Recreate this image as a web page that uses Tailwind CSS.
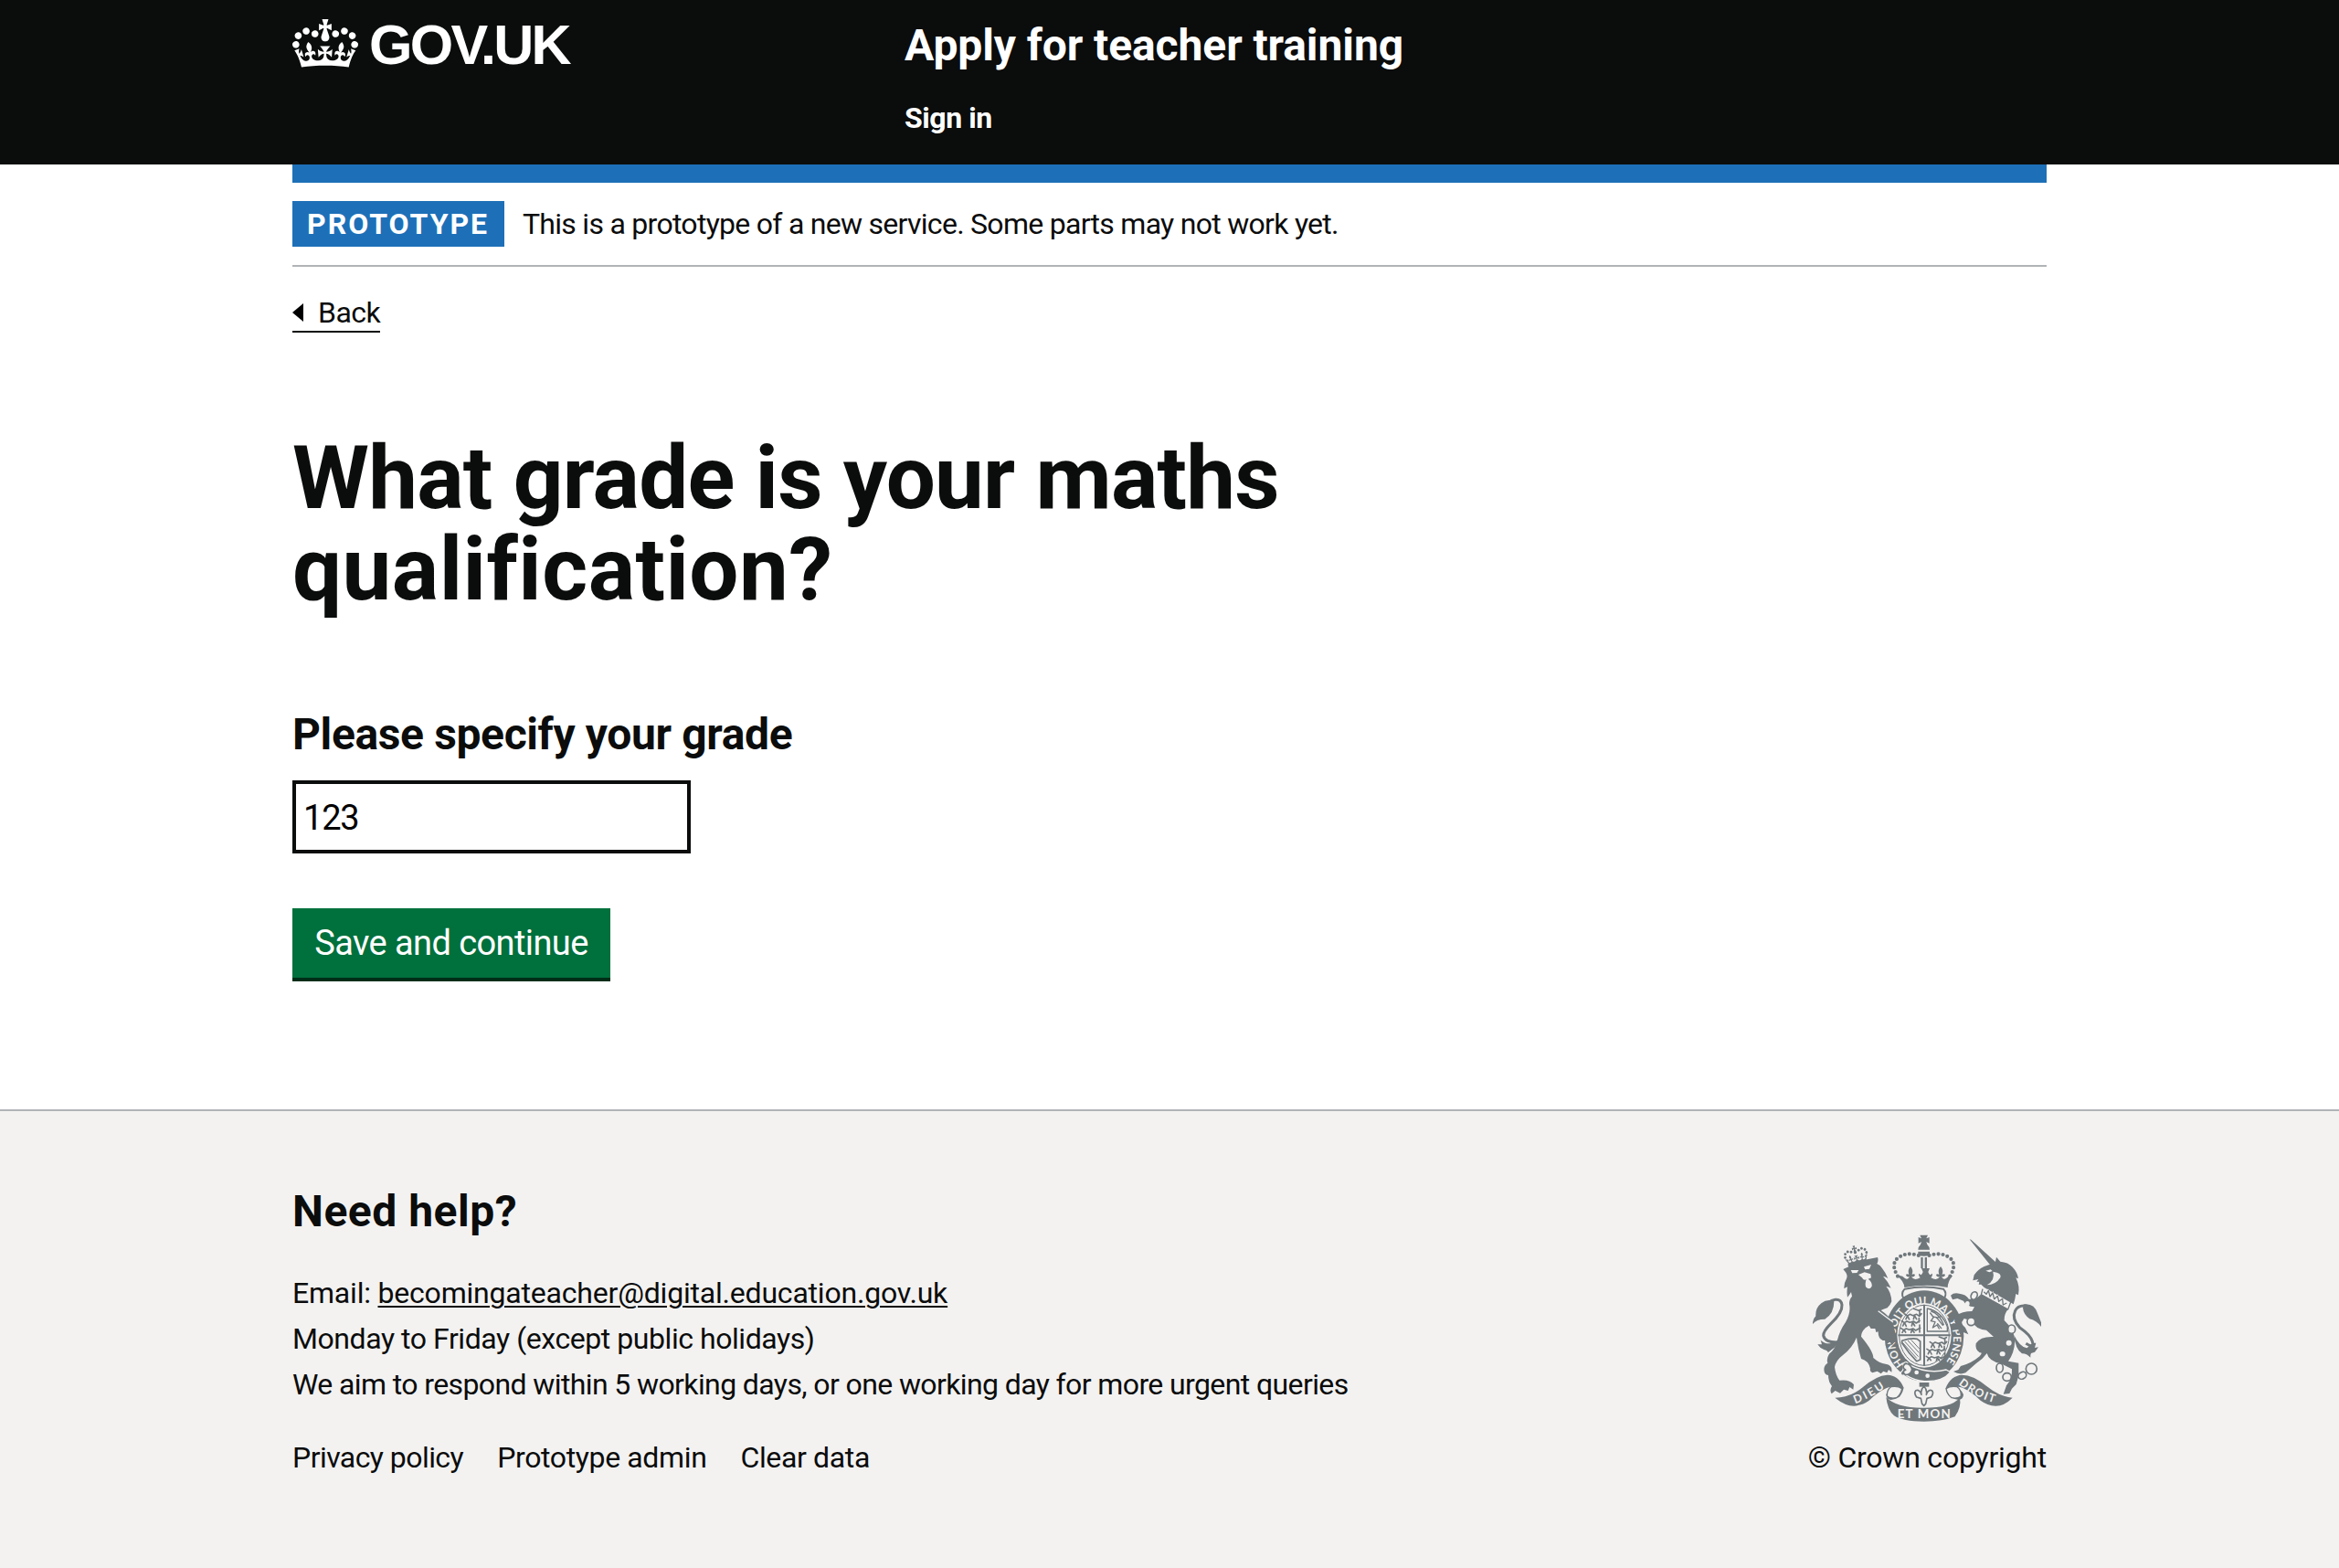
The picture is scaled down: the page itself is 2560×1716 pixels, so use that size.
<!DOCTYPE html>
<html lang="en">
<head>
<meta charset="utf-8">
<title>What grade is your maths qualification?</title>
<script src="https://cdn.jsdelivr.net/npm/@tailwindcss/browser@4"></script>
</head>
<body class="bg-white text-[#0b0c0c] font-['Roboto',sans-serif] text-[32px] leading-[50px]">
<header class="bg-[#0b0c0c] text-white h-[180px]">
  <div class="mx-[320px] flex">
    <a class="flex w-[670px] pt-[21px]">
      <svg class="w-[72px] h-[53px]" viewBox="0 0 132 97" fill="currentColor"><path id="crown" fill-rule="evenodd" d="M25 30.2c3.5 1.5 7.7-.2 9.1-3.7 1.5-3.6-.2-7.8-3.9-9.2-3.6-1.4-7.6.3-9.1 3.9-1.4 3.5.3 7.5 3.9 9zM9 39.5c3.6 1.5 7.8-.2 9.2-3.7 1.5-3.6-.2-7.8-3.9-9.1-3.6-1.5-7.6.2-9.1 3.8-1.4 3.5.3 7.5 3.8 9zM4.4 57.2c3.5 1.5 7.7-.2 9.1-3.8 1.5-3.6-.2-7.7-3.9-9.1-3.5-1.5-7.6.3-9.1 3.8-1.4 3.5.3 7.6 3.9 9.1zm38.3-21.4c3.5 1.5 7.7-.2 9.1-3.8 1.5-3.6-.2-7.7-3.9-9.1-3.6-1.5-7.6.3-9.1 3.8-1.3 3.6.4 7.7 3.9 9.1zm64.4-5.6c-3.6 1.5-7.8-.2-9.1-3.7-1.5-3.6.2-7.8 3.8-9.2 3.6-1.4 7.7.3 9.2 3.9 1.3 3.5-.4 7.5-3.9 9zm15.9 9.3c-3.6 1.5-7.7-.2-9.1-3.7-1.5-3.6.2-7.8 3.7-9.1 3.6-1.5 7.7.2 9.2 3.8 1.5 3.5-.3 7.5-3.8 9zm4.7 17.7c-3.6 1.5-7.8-.2-9.2-3.8-1.5-3.6.2-7.7 3.9-9.1 3.6-1.5 7.7.3 9.2 3.8 1.3 3.5-.4 7.6-3.9 9.1zM89.3 35.8c-3.6 1.5-7.8-.2-9.2-3.8-1.4-3.6.2-7.7 3.9-9.1 3.6-1.5 7.7.3 9.2 3.8 1.4 3.6-.3 7.7-3.9 9.1zM69.7 17.7l8.9 4.7V9.3l-8.9 2.8c-.2-.3-.5-.6-.9-.9L72.4 0H59.6l3.5 11.2c-.3.3-.6.5-.9.9l-8.8-2.8v13.1l8.8-4.7c.3.3.6.7.9.9l-5 15.4v.1c-.2.8-.4 1.6-.4 2.4 0 4.1 3.1 7.5 7 8.1h.2c.3 0 .7.1 1 .1.4 0 .7 0 1-.1h.2c4-.6 7.1-4.1 7.1-8.1 0-.8-.1-1.7-.4-2.4V34l-5.1-15.4c.4-.2.7-.6 1-.9zM66 92.8c16.9 0 32.8 1.1 47.1 3.2 4-16.9 8.9-26.7 14-33.5l-9.6-3.4c1 4.9 1.1 7.2 0 10.2-1.5-1.4-3-4.3-4.2-8.7L108.6 76c2.8-2 5-3.2 7.5-3.3-4.4 9.4-10 11.9-13.6 11.2-4.3-.8-6.3-4.6-5.6-7.9 1-4.7 5.7-5.9 8-.5 4.3-8.7-3-11.4-7.6-8.8 7.1-7.2 7.9-13.5 2.1-21.1-8 6.1-8.1 12.3-4.5 20.8-4.7-5.4-12.1-2.5-9.5 6.2 3.4-5.2 7.9-2 7.2 3.1-.6 4.3-6.4 7.8-13.5 7.2-10.3-.9-10.9-8-11.2-13.8 2.5-.5 7.1 1.8 11 7.3L80.2 60c-4.1 4.4-8 5.3-12.3 5.4 1.4-4.4 8-11.6 8-11.6H55.5s6.4 7.2 7.9 11.6c-4.2-.1-8-1-12.3-5.4l1.4 16.4c3.9-5.5 8.5-7.7 10.9-7.3-.3 5.8-.9 12.8-11.1 13.8-7.2.6-12.9-2.9-13.5-7.2-.7-5 3.8-8.3 7.1-3.1 2.7-8.7-4.6-11.6-9.4-6.2 3.7-8.5 3.6-14.7-4.6-20.8-5.8 7.6-5 13.9 2.2 21.1-4.7-2.6-11.9.1-7.7 8.8 2.3-5.5 7.1-4.2 8.1.5.7 3.3-1.3 7.1-5.7 7.9-3.5.7-9-1.8-13.5-11.2 2.5.1 4.7 1.3 7.5 3.3l-4.7-15.4c-1.2 4.4-2.7 7.2-4.3 8.7-1.1-3-.9-5.3 0-10.2l-9.5 3.4c5 6.9 9.9 16.7 14 33.5 14.8-2.1 30.8-3.2 47.7-3.2z"/></svg>
      <span class="ml-3 font-['Liberation_Sans',sans-serif] text-[61px] leading-[56px] font-bold tracking-[-2.7px]">GOV.UK</span>
    </a>
    <div class="flex flex-col font-bold pt-[25px]">
      <a class="text-[48px] leading-[50px] tracking-[-0.1px]">Apply for teacher training</a>
      <a class="mt-[34px] leading-[40px] tracking-[-0.42px]">Sign in</a>
    </div>
  </div>
</header>
<div class="mx-[320px] h-5 bg-[#1d70b8]"></div>
<main class="mx-[320px] flex flex-col items-start">
  <div class="flex w-full gap-5 py-5 border-b-2 border-[#b1b4b6]">
    <strong class="w-[232px] pl-4 bg-[#1d70b8] text-white font-bold tracking-[2px] whitespace-nowrap">PROTOTYPE</strong>
    <span class="tracking-[-0.72px]">This is a prototype of a new service. Some parts may not work yet.</span>
  </div>
  <a class="mt-[29px] flex items-center h-[43px] border-b-2 leading-[40px] tracking-[-0.53px]"><svg class="w-3 h-5 mr-4" viewBox="0 0 12 20"><path d="M0 10 12 0v20z"/></svg>Back</a>
  <h1 class="mt-[109px] text-[96px] leading-[100px] font-bold tracking-[-0.77px]">What grade is your maths<br><span class="tracking-[0.47px]">qualification?</span></h1>
  <label class="mt-[101px] text-[48px] leading-[60px] font-bold tracking-[-0.37px]">Please specify your grade</label>
  <div class="mt-5 w-[436px] h-20 border-4 border-[#0b0c0c] pl-2 text-[38px] leading-[74px] tracking-[-1.2px] text-black">123</div>
  <button class="mt-[60px] w-[348px] h-20 bg-[#00703c] border-b-4 border-[#002d18] text-white text-[38px] leading-[76px] tracking-[-0.59px] text-center">Save and continue</button>
</main>
<footer class="mt-[140px] h-[502px] bg-[#f3f2f1] border-t-2 border-[#b1b4b6] px-[320px] flex justify-between">
  <div class="pt-20">
    <h2 class="text-[48px] leading-[60px] font-bold tracking-[0.51px]">Need help?</h2>
    <div class="mt-[34px] flex flex-col whitespace-nowrap">
      <p class="tracking-[-0.2px]">Email: <a class="underline decoration-2 underline-offset-[3px]">becomingateacher@digital.education.gov.uk</a></p>
      <p class="tracking-[-0.44px]">Monday to Friday (except public holidays)</p>
      <p class="tracking-[-0.61px]">We aim to respond within 5 working days, or one working day for more urgent queries</p>
    </div>
    <div class="mt-[30px] flex gap-[37px]">
      <a class="tracking-[-0.56px]">Privacy policy</a><a class="tracking-[-0.37px]">Prototype admin</a><a class="tracking-[-0.35px]">Clear data</a>
    </div>
  </div>
  <div class="pt-[135px] flex flex-col items-end">
    <svg class="w-[250px] h-[206px] mr-[6px]" viewBox="72 64 750 618" fill="#6f777b" stroke-linejoin="round">
      <!-- central crown -->
      <path d="M424 66h26l-5 11 10-4v20l-10-5 3 9q8 8 8 17h-38q0-9 8-17l3-9-10 5V73l10 4zM418 120h38v11q-19 9-38 0zM427 139h7v36h-7zm13 0h7v36h-7z"/>
      <g fill="none" stroke="#6f777b" stroke-width="12.500" stroke-linecap="round" stroke-dasharray="0 15.200"><path d="M351 201Q327 160 352 141Q380 120 420 133"/><path d="M523 201Q547 160 522 141Q494 120 454 133"/></g>
      <path d="M354 199q12-2 20 8 10 8 16-4-11 2-12-6 2-6 10-2-6-14 5-26 11 12 5 26 8-4 10 2-1 8-12 6 9 15 30 2-6-1-6-13l8 5q4-5 6-10l-5-12h27l-5 12q2 5 6 10l8-5q0 12-6 13 21 13 30-2-11 2-12-6 2-6 10-2-6-14 5-26 11 12 5 26 8-4 10 2-1 8-12 6 6 12 16 4 8-10 20-8-15 18-16 39-65-13-142 0-1-21-25-39z"/>
      <path d="M374 243Q437 230 501 243Q514 257 504 273Q437 240 370 273Q360 257 374 243z" fill="#f3f2f1" stroke="#6f777b" stroke-width="6"/>
      <!-- garter -->
      <ellipse cx="438" cy="397" rx="130" ry="149"/>
      <ellipse cx="438" cy="395" rx="89" ry="106" fill="#f3f2f1"/>
      <ellipse cx="438" cy="395" rx="82" ry="99" fill="none" stroke="#6f777b" stroke-width="3"/>
      <path id="motto" d="M372 490A96 114 0 1 1 502 492" fill="none"/>
      <text font-family="Lato,sans-serif" font-weight="700" font-size="35" fill="#f3f2f1"><textPath href="#motto" textLength="500">HONI SOIT QUI MAL Y PENSE</textPath></text>
      <path d="M435 294h6v201h-6zM352 392h172v6H352z"/>
      <g fill="none" stroke="#6f777b" stroke-width="5" stroke-linecap="round">
        <path id="lions" d="M374 325l9 6 8-5 10 4 12-4 9 6 7-8M378 342l5-11 6 12m14-1 3-12 7 12m10-28v13M364 348l9 6 8-5 10 4 12-4 9 6 11-8M368 364l5-11 6 12m18-1 3-12 7 12m14-25v13M362 372l9 6 8-5 10 4 12-4 9 6 15-8M366 386l5-9 6 8m18 1 3-10 7 10m18-25v24M404 308l16 6 8-4"/>
        <use href="#lions" x="83" y="92"/>
        <path d="M448 307v75h67M448 307q48 10 66 60v15M461 316q26 8 41 44M458 322l9 12 11 2 10 12 11 14M470 334l-10 14 14 3-8 19 14-9 7 12M478 338l13-4M482 357l12 15" stroke-width="4"/>
        <path d="M365 413q30-10 50-6l10 8v60l-12 5q-26-27-48-60z"/><path d="M375 416l43 48M385 413l35 38M396 411l26 28M368 420l45 50" stroke-width="3"/>
      </g>
      <path d="M368 488q14-12 18 3 65 33 124 17l14 8q-25 32-85 30-32-2-64-22-14 8-14-7 14-10 7-29z" stroke="#f3f2f1" stroke-width="4"/>
      <path d="M376 488q-14 12 1 21-14 5-1 16 18 0 22-18-4-20-22-19z" fill="#f3f2f1" stroke="#6f777b" stroke-width="5"/>
      <circle cx="413" cy="517" r="7" fill="#f3f2f1"/><circle cx="449" cy="528" r="7" fill="#f3f2f1"/>
      <!-- lion -->
      <use href="#crown" transform="translate(167 111) rotate(-14) scale(.61)"/>
      <path d="M172 178 190 170q-5-6 0-12l95-19q4 10-2 21 12 5 17 15 12 15 19 33-8-6-16-7 17 18 26 39-8-5-16-6 17 20 18 50-4 12-14 21-15 5-21 8 26 17 40 41l10 48q4 12-8 18l-6 8-7-12-9 8-4-12-10 0q-16-8-15-29l-7 2-3-12-14 0-6-10-12 8q-14 14-14 28 40 48 40 70 20 18 40 20 24 3 20 27l-10-8-5 10-12-5-8 8-12-8-16 5q-10-5-7-14-6-26-30-32-10-32-15-70-14 34-44 57-24 18-28 40 3 28 16 44 34-4 47 14l-2 16-12-8-5 12-14-4-12 12-16-8-12 10q-8-12 1-25-12-14-12-36-14 0-14-20 1-14 12-20-5-14 5-30 20-16 26-42 8-34 28-62 18-32 12-60 0-16 9-25l-3-14q-6 11-12 17-3-16 0-34l-11 5q-1-16 8-32 4-10-2-20z"/>
      <path d="M197 181l26 0-6 9-15 1zM240 170l24-7-6 14-14 2zM222 196l20-8 20 6 2 12-10 4q14 10 12 24-8 14-20 2-3-14 2-24-10 4-14-6z" fill="#f3f2f1"/>
      <path d="M287 315l49 37" stroke="#f3f2f1" stroke-width="4" fill="none"/>
      <path d="M150 418Q112 418 107 396Q106 382 132 356Q170 320 168 295Q165 276 146 278Q134 279 122 289" fill="none" stroke="#6f777b" stroke-width="9"/>
      <path d="M142 284q-22-10-42 6-20 16-18 42-11 10-10 26 12-16 40-16 30-18 30-58zM88 425l14 0-4-14q16 14 34 10 20-4 28-18-8 30-25 38l-12 10q-4-8-14-9-14-5-21-17z"/>
      <!-- unicorn -->
      <path d="M587 80l5 1 80 73-16 12zM602 197q12-18 33-28l27-10 10-6 3-15 13 15q26 2 40 18 17 18 19 38l-8-3q14 28 8 57l-8-4q-3 22-8 34l-96-55-10-10-8 0 2-9-9 0 6-8-18 4zM627 258l88 50q-15 16-14 38 32 30 35 66-2 42-22 68l34 6v42l-8 28-14 14-8 16-20 2 10-28q20-22 18-54l-36-18q-40-8-46-34-14 20-36 34l-34 30q-20 8-40-4l16-6 8-12q34-8 62-32 12-14 0-12-16-10-12-30 14-24 58-22l-24-22q-38-4-45-30l-28-8-10 16 14 14 10 22-14-6-14 6-8-24q-14-20-8-36 24-16 56-16l8-14q-28-2-36-20l-20-8-16 4-6-14q10-10 28-6 22 2 32 18l22 0z"/>
      <path d="M640 183l16-4 6 5-10 4zM664 186q30 4 24 20-16 24-44 24 28-16 20-44zM626 240l14 14 8-12 8 20 8-12 6 20 10-10 4 20 12-8 2 22 10-8 14 8-6 16-95-52z" fill="#f3f2f1"/>
      <path d="M627 262l86 48 9-24M630 243l-5 19M634 252l8 8 7-12 5 20 9-12 5 20 11-10 4 18 12-9 2 20 12-6" fill="none" stroke="#6f777b" stroke-width="4"/>
      <path d="M772 422Q800 440 793 415Q787 394 752 370Q724 340 737 314Q747 294 775 299" fill="none" stroke="#6f777b" stroke-width="9"/>
      <path d="M766 293q34-4 44 30l12 30v14q-14-20-38-26-20-14-22-36zM733 395q20 40 42 42l20-17 10 0-4 16 12-2-12 16-12 4q-4 8-2 14-14-14-28-13-22-14-26-60z"/>
      <g fill="none" stroke="#6f777b" stroke-width="5"><ellipse cx="602" cy="265" rx="10" ry="13" fill="#f3f2f1" transform="rotate(25 602 265)"/><circle cx="592" cy="350" r="13" fill="#f3f2f1"/><ellipse cx="725" cy="375" rx="12" ry="14" fill="#f3f2f1"/><ellipse cx="686" cy="502" rx="11" ry="15"/><ellipse cx="710" cy="532" rx="14" ry="13"/><ellipse cx="760" cy="527" rx="14" ry="11" transform="rotate(-30 760 527)"/><circle cx="790" cy="505" r="18"/></g>
      <g fill="#f3f2f1"><ellipse cx="580" cy="291" rx="7" ry="8"/><ellipse cx="716" cy="420" rx="9" ry="9"/><ellipse cx="695" cy="456" rx="9" ry="8"/></g>
      <!-- badge and motto scroll -->
      <path d="M422 550h32v14h-32z"/><path d="M437 562q12 12 8 28 6-18 18-14 8 8-2 22l-14 4-4 18-6 6-6-6-4-18-14-4q-10-14-2-22 12-4 18 14-4-16 8-28z" fill="#f3f2f1" stroke="#6f777b" stroke-width="5"/>
      <path d="M145 600q50 0 92-35 44-38 80-40 36 0 54 42-4 18-14 30-14 8-28 10-14-2-16-16 4-20 32-24-18-6-32 2-30 14-56 40-22 16-50 18-28 0-62-27zM728 600q-44-4-84-37-44-38-82-38-36 2-53 42 2 18 14 30 14 8 28 10 14-2 16-16-4-20-30-24 16-6 30 2 30 14 56 40 22 16 50 18 28 0 55-27z"/>
      <path d="M329 564q22-4 36 6-2 18-18 30-18 4-30-4-4-20 12-32zM546 564q-22-4-36 6 2 18 18 30 18 4 30-4 4-20-12-32z" fill="#f3f2f1" stroke="#6f777b" stroke-width="4"/>
      <path d="M313 598q34 36 124 35 90 0 118-33 6 30-16 62-40 16-102 16-70 0-98-19-22-20-26-61z"/>
      <g font-family="Lato,sans-serif" font-weight="700" font-size="40" fill="#f3f2f1"><text x="350" y="668" textLength="174">ET MON</text><path id="dieu" d="M212 619Q258 604 322 558" fill="none"/><path id="droit" d="M550 556Q606 600 674 618" fill="none"/><text font-size="37"><textPath href="#dieu" textLength="110">DIEU</textPath></text><text font-size="37"><textPath href="#droit" textLength="132">DROIT</textPath></text></g>
    </svg>
    <p class="mt-[13px] tracking-[-0.22px]">© Crown copyright</p>
  </div>
</footer>
</body>
</html>
